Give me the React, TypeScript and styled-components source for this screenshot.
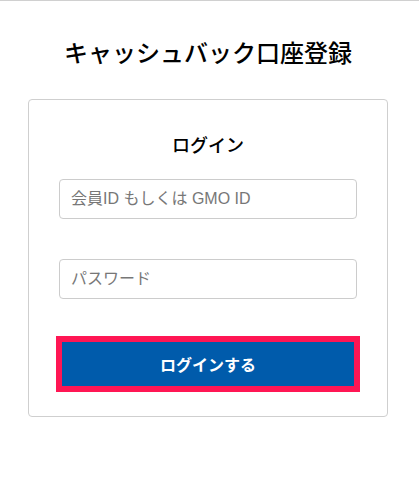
import React from "react";
import styled, { createGlobalStyle } from "styled-components";

const Global = createGlobalStyle`
  html, body { margin: 0; padding: 0; background: #fff; }
  body {
    font-family: "Liberation Sans", "Noto Sans CJK JP", sans-serif;
    color: #111;
    border-top: 1px solid #d0d0d0;
  }
  * { box-sizing: border-box; }
`;

const Page = styled.main`
  display: flex;
  flex-direction: column;
  align-items: flex-start;
  padding: 33px 0 40px 28px;
`;

const Title = styled.h1`
  margin: 0 0 29px;
  width: 360px;
  text-align: center;
  font-family: "Noto Sans CJK JP", sans-serif;
  font-size: 24px;
  line-height: 36px;
  font-weight: 500;
  color: #000;
`;

const Card = styled.section`
  width: 360px;
  border: 1px solid #cfcfcf;
  border-radius: 4px;
  padding: 31px 30px 27px;
  display: flex;
  flex-direction: column;
`;

const CardTitle = styled.h2`
  margin: 0 0 21px;
  text-align: center;
  font-family: "Noto Sans CJK JP", sans-serif;
  font-size: 18px;
  line-height: 27px;
  font-weight: 500;
  color: #000;
`;

const Field = styled.input`
  display: block;
  width: 100%;
  height: 40px;
  margin: 0 0 40px;
  padding: 0 11px;
  border: 1px solid #cccccc;
  border-radius: 4px;
  font-family: "Liberation Sans", "Noto Sans CJK JP", sans-serif;
  font-size: 16px;
  color: #333;
  outline: none;
  &::placeholder { color: #777; }
`;

const Submit = styled.button`
  display: block;
  width: 100%;
  height: 50px;
  border: 3px solid #ff1654;
  box-shadow: 0 0 0 3px #ff1654;
  background: #005bab;
  color: #fff;
  font-family: "Noto Sans CJK JP", sans-serif;
  font-size: 16px;
  font-weight: 700;
  cursor: pointer;
  padding: 0;
`;

export default function App() {
  return (
    <>
      <Global />
      <Page>
        <Title>キャッシュバック口座登録</Title>
        <Card>
          <CardTitle>ログイン</CardTitle>
          <Field type="text" placeholder="会員ID もしくは GMO ID" />
          <Field type="password" placeholder="パスワード" />
          <Submit type="button">ログインする</Submit>
        </Card>
      </Page>
    </>
  );
}
